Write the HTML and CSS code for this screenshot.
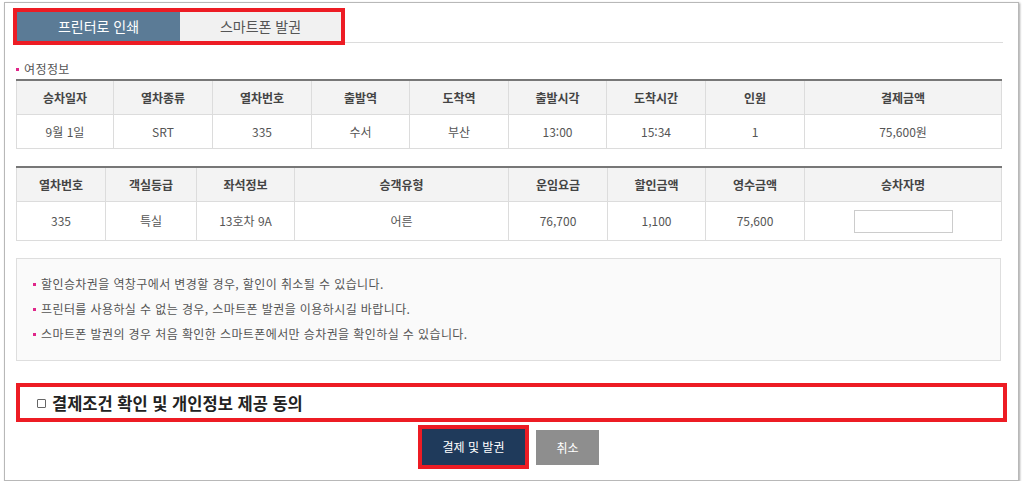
FILE: index.html
```html
<!DOCTYPE html>
<html lang="ko">
<head>
<meta charset="utf-8">
<title>승차권 발권</title>
<link rel="stylesheet" href="styles.css">
</head>
<body>
<div class="frame">
  <div class="tabbar">
    <div class="tabs">
      <div class="tab tab-active">프린터로 인쇄</div>
      <div class="tab">스마트폰 발권</div>
    </div>
    <div class="tabline"></div>
  </div>
  <div class="content">
    <div class="section-title"><span class="dot"></span>여정정보</div>
    <table class="grid grid1">
      <colgroup>
        <col style="width:97px"><col style="width:99px"><col style="width:99px"><col style="width:98px"><col style="width:99px"><col style="width:98px"><col style="width:99px"><col style="width:99px"><col style="width:197px">
      </colgroup>
      <tr><th>승차일자</th><th>열차종류</th><th>열차번호</th><th>출발역</th><th>도착역</th><th>출발시각</th><th>도착시간</th><th>인원</th><th>결제금액</th></tr>
      <tr><td>9월 1일</td><td>SRT</td><td>335</td><td>수서</td><td>부산</td><td>13:00</td><td>15:34</td><td>1</td><td>75,600원</td></tr>
    </table>
    <table class="grid grid2">
      <colgroup>
        <col style="width:89px"><col style="width:91px"><col style="width:98px"><col style="width:214px"><col style="width:99px"><col style="width:98px"><col style="width:99px"><col style="width:197px">
      </colgroup>
      <tr><th>열차번호</th><th>객실등급</th><th>좌석정보</th><th>승객유형</th><th>운임요금</th><th>할인금액</th><th>영수금액</th><th>승차자명</th></tr>
      <tr><td>335</td><td>특실</td><td>13호차 9A</td><td>어른</td><td>76,700</td><td>1,100</td><td>75,600</td><td><input class="name-input" type="text"></td></tr>
    </table>
    <div class="notice">
      <div class="notice-item"><span class="dot"></span>할인승차권을 역창구에서 변경할 경우, 할인이 취소될 수 있습니다.</div>
      <div class="notice-item"><span class="dot"></span>프린터를 사용하실 수 없는 경우, 스마트폰 발권을 이용하시길 바랍니다.</div>
      <div class="notice-item"><span class="dot"></span>스마트폰 발권의 경우 처음 확인한 스마트폰에서만 승차권을 확인하실 수 있습니다.</div>
    </div>
    <div class="agree">
      <span class="checkbox"></span><span class="agree-text">결제조건 확인 및 개인정보 제공 동의</span>
    </div>
    <div class="buttons">
      <div class="btn-outline"><div class="btn btn-pay">결제 및 발권</div></div>
      <div class="btn btn-cancel">취소</div>
    </div>
  </div>
</div>
</body>
</html>
```

FILE: styles.css
```css
html, body {
  margin: 0;
  padding: 0;
  background: #ffffff;
}
body {
  font-family: "Noto Sans CJK KR", "Noto Sans", sans-serif;
  font-size: 12px;
  color: #555;
}
.frame {
  margin: 2px 0 0 4px;
  width: 1015px;
  height: 479px;
  box-sizing: border-box;
  border: 1px solid #b8b8b8;
  box-shadow: 1px 1px 2px rgba(0, 0, 0, 0.35);
  background: #fff;
}
.tabbar {
  display: flex;
  margin: 5px 15px 0 8px;
}
.tabs {
  display: flex;
  border: 4px solid #ed1c24;
}
.tab {
  width: 161px;
  height: 29px;
  line-height: 29px;
  text-align: center;
  font-size: 14px;
  background: #f1f1f1;
  color: #555;
}
.tab-active {
  width: 163px;
  background: #5b7b96;
  color: #fff;
}
.tabline {
  flex: 1;
  align-self: flex-end;
  border-bottom: 1px solid #dcdcdc;
  margin-bottom: 2px;
}
.content {
  padding: 0 17px 0 11px;
}
.section-title {
  margin-top: 16px;
  height: 16px;
  line-height: 16px;
  font-size: 12px;
  letter-spacing: 0.4px;
  color: #555;
}
.dot {
  display: inline-block;
  width: 3px;
  height: 3px;
  background: #e0268a;
  vertical-align: middle;
  margin-right: 5px;
  position: relative;
  top: -1px;
}
.grid {
  width: 985px;
  border-collapse: collapse;
  table-layout: fixed;
  border-top: 2px solid #777;
}
.grid1 {
  margin-top: 2px;
}
.grid2 {
  margin-top: 17px;
}
.grid th, .grid td {
  border: 1px solid #dcdcdc;
  padding: 0;
  text-align: center;
  line-height: 16px;
  font-size: 12px;
}
.grid th {
  height: 33px;
  background: #f3f3f3;
  color: #444;
  font-weight: 700;
}
.grid td {
  height: 33px;
  color: #555;
}
.grid2 td {
  height: 38px;
}
.grid tr:first-child th {
  border-top: 0;
}
.name-input {
  display: block;
  margin: 0 auto;
  width: 99px;
  height: 23px;
  box-sizing: border-box;
  border: 1px solid #ccc;
  background: #fff;
  padding: 0;
}
.notice {
  margin-top: 17px;
  border: 1px solid #dedede;
  background: #fafafa;
  padding: 12px 16px 14px;
}
.notice-item {
  line-height: 25px;
  font-size: 12px;
  letter-spacing: 0.4px;
  color: #555;
}
.agree {
  margin: 22px -6px 0 0;
  border: 4px solid #ed1c24;
  height: 31px;
  display: flex;
  align-items: center;
  padding-left: 17px;
}
.checkbox {
  width: 7px;
  height: 7px;
  border: 1px solid #666;
  border-radius: 1px;
  margin-right: 6px;
  margin-top: 1px;
}
.agree-text {
  font-size: 16.5px;
  font-weight: 700;
  color: #222;
  line-height: 20px;
}
.buttons {
  display: flex;
  justify-content: center;
  align-items: center;
  gap: 7px;
  margin-top: 3px;
}
.btn-outline {
  border: 4px solid #ed1c24;
}
.btn {
  color: #fff;
  text-align: center;
  font-size: 12px;
}
.btn-pay {
  width: 103px;
  height: 36px;
  line-height: 36px;
  background: #1f3a5b;
}
.btn-cancel {
  width: 63px;
  height: 35px;
  line-height: 35px;
  background: #8e8e8e;
}
```
